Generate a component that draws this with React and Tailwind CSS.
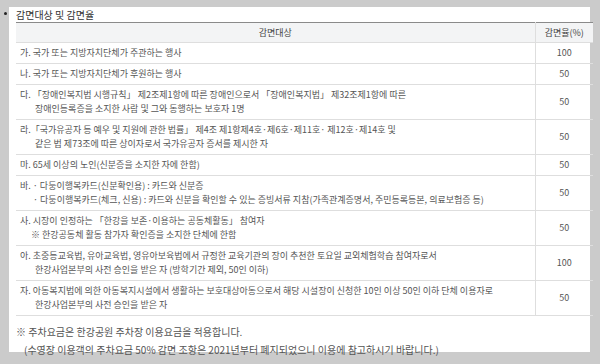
import React from 'react';

const rows = [
  { lines: ['가. 국가 또는 지방자치단체가 주관하는 행사'], rate: 100 },
  { lines: ['나. 국가 또는 지방자치단체가 후원하는 행사'], rate: 50 },
  {
    lines: [
      '다. 「장애인복지법 시행규칙」 제2조제1항에 따른 장애인으로서 「장애인복지법」 제32조제1항에 따른',
      '장애인등록증을 소지한 사람 및 그와 동행하는 보호자 1명',
    ],
    rate: 50,
  },
  {
    lines: [
      '라.「국가유공자 등 예우 및 지원에 관한 법률」 제4조 제1항제4호·제6호·제11호· 제12호·제14호 및',
      '같은 법 제73조에 따른 상이자로서 국가유공자 증서를 제시한 자',
    ],
    rate: 50,
  },
  { lines: ['마. 65세 이상의 노인(신분증을 소지한 자에 한함)'], rate: 50 },
  {
    lines: [
      '바. · 다둥이행복카드(신분확인용) : 카드와 신분증',
      '· 다둥이행복카드(체크, 신용) : 카드와 신분을 확인할 수 있는 증빙서류 지참(가족관계증명서, 주민등록등본, 의료보험증 등)',
    ],
    indent: 'pl-[13px]',
    rate: 50,
  },
  {
    lines: [
      '사. 시장이 인정하는 「한강을 보존·이용하는 공동체활동」 참여자',
      '※ 한강공동체 활동 참가자 확인증을 소지한 단체에 한함',
    ],
    indent: 'pl-[11px]',
    rate: 50,
  },
  {
    lines: [
      '아. 초중등교육법, 유아교육법, 영유아보육법에서 규정한 교육기관의 장이 추천한 토요일 교외체험학습 참여자로서',
      '한강사업본부의 사전 승인을 받은 자 (방학기간 제외, 50인 이하)',
    ],
    rate: 100,
  },
  {
    lines: [
      '자. 아동복지법에 의한 아동복지시설에서 생활하는 보호대상아동으로서 해당 시설장이 신청한 10인 이상 50인 이하 단체 이용자로',
      '한강사업본부의 사전 승인을 받은 자',
    ],
    rate: 50,
  },
];

export default function App() {
  return (
    <div
      className="relative w-[600px] h-[364px] bg-[#cbcbcb] overflow-hidden pl-[9px] pt-[9px]"
      style={{ fontFamily: '"Noto Sans CJK KR", "Noto Sans", sans-serif' }}
    >
      <span className="absolute left-[4px] top-[12px] w-[3px] h-[3px] rounded-full bg-[#222]" />
      <div className="w-[581px] h-[345px] bg-white">
        <h3 className="pl-[7px] text-[10px] leading-[15px] text-[#333] -mt-[2px]">감면대상 및 감면율</h3>
        <table className="ml-[7px] w-[577px] border-collapse text-[9px] text-[#555]">
          <thead>
            <tr className="bg-[#f3f4f5] border-t border-[#8a8a8a]">
              <th className="h-[20px] font-normal text-[#444] text-center border-b border-[#dedede]">감면대상</th>
              <th className="w-[58px] font-normal text-[#444] text-center border-b border-l border-[#dedede]">감면율(%)</th>
            </tr>
          </thead>
          <tbody>
            {rows.map((row, i) => (
              <tr key={i} className="border-b border-[#dedede]">
                <td className="pl-[4px] py-[3px] leading-[14px] whitespace-nowrap">
                  {row.lines.map((line, j) => (
                    <div key={j} className={j > 0 ? row.indent || 'pl-[15px]' : ''}>
                      {line}
                    </div>
                  ))}
                </td>
                <td className="text-center border-l border-[#dedede] leading-[14px]">{row.rate}</td>
              </tr>
            ))}
          </tbody>
        </table>
        <div className="pl-[7px] pt-[7px] text-[10px] leading-[18px] text-[#555]">
          <p>※ 주차요금은 한강공원 주차장 이용요금을 적용합니다.</p>
          <p className="pl-[8px]">(수영장 이용객의 주차요금 50% 감면 조항은 2021년부터 폐지되었으니 이용에 참고하시기 바랍니다.)</p>
        </div>
      </div>
    </div>
  );
}
